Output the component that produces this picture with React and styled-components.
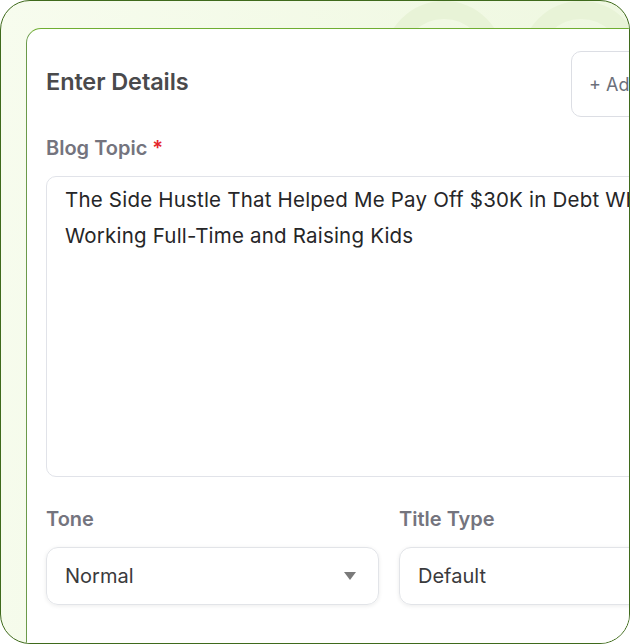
import React from 'react';
import styled, { createGlobalStyle } from 'styled-components';

const GlobalStyle = createGlobalStyle`
  * { box-sizing: border-box; }
  html, body { margin: 0; padding: 0; background: #ffffff; }
  body { font-family: Inter, "Noto Sans", sans-serif; }
`;

const Frame = styled.div`
  position: relative;
  width: 630px;
  height: 644px;
  border: 1.5px solid #3f6a1c;
  border-radius: 30px;
  overflow: hidden;
  background: linear-gradient(100deg, #f7fcee 0%, #f1f9e4 60%, #eef7e0 100%);
  padding: 27px 0 0 25px;
`;

const Decor = styled.svg`
  position: absolute;
  top: 0;
  left: 0;
  pointer-events: none;
`;

const Card = styled.div`
  position: relative;
  width: 726px;
  height: 700px;
  background: #ffffff;
  border-top: 1.5px solid #6fae32;
  border-left: 1.5px solid #6b9a4a;
  border-top-left-radius: 15px;
  padding: 22px 20px 0 19px;
`;

const Header = styled.div`
  display: flex;
  align-items: flex-start;
  justify-content: space-between;
  height: 66px;
`;

const Title = styled.h2`
  margin: 16px 0 0;
  line-height: 30px;
  font-size: 23.5px;
  font-weight: 600;
  color: #4a4a4c;
  letter-spacing: -0.1px;
`;

const GhostButton = styled.button`
  width: 161px;
  height: 66px;
  border: 1.5px solid #dcdee4;
  border-radius: 10px;
  background: #ffffff;
  font-family: inherit;
  font-size: 18px;
  color: #6b6f7a;
  text-align: left;
  padding-left: 17px;
  white-space: nowrap;
`;

const Field = styled.div`
  display: flex;
  flex-direction: column;
  margin-top: ${(p) => p.$top || 0}px;
`;

const Label = styled.label`
  font-size: 20px;
  font-weight: 600;
  color: #74747e;
  margin-bottom: 16px;
  line-height: 24px;

  span {
    color: #e5262b;
    margin-left: 5px;
  }
`;

const TextArea = styled.div`
  height: 301px;
  border: 1.5px solid #e1e3e9;
  border-radius: 10px;
  padding: 5px 18px;
  font-size: 20.5px;
  letter-spacing: 0.2px;
  line-height: 36px;
  color: #262628;
`;

const Row = styled.div`
  display: grid;
  grid-template-columns: 333px 333px;
  column-gap: 20px;
  margin-top: 30px;
`;

const Select = styled.div`
  height: 58px;
  border: 1px solid #e2e4e8;
  border-radius: 12px;
  box-shadow: 0 1px 4px rgba(0, 0, 0, 0.08);
  display: flex;
  align-items: center;
  justify-content: space-between;
  padding: 0 22px 0 18px;
  font-size: 20px;
  color: #3a3a3c;
`;

const Caret = styled.span`
  width: 0;
  height: 0;
  border-left: 6px solid transparent;
  border-right: 6px solid transparent;
  border-top: 8px solid #7a7a7a;
`;

export default function App() {
  return (
    <>
      <GlobalStyle />
      <Frame>
        <Decor width="630" height="60" viewBox="0 0 630 60">
          <circle cx="443" cy="60" r="51" fill="none" stroke="#e8f3d7" strokeWidth="18" />
          <circle cx="580" cy="60" r="51" fill="none" stroke="#e8f3d7" strokeWidth="18" />
        </Decor>
        <Card>
          <Header>
            <Title>Enter Details</Title>
            <GhostButton>+ Add Reference</GhostButton>
          </Header>
          <Field $top={19}>
            <Label>
              Blog Topic<span>*</span>
            </Label>
            <TextArea>
              The Side Hustle That Helped Me Pay Off $30K in Debt While Working Full-Time and Raising Kids
            </TextArea>
          </Field>
          <Row>
            <Field>
              <Label>Tone</Label>
              <Select>
                Normal
                <Caret />
              </Select>
            </Field>
            <Field>
              <Label>Title Type</Label>
              <Select>
                Default
                <Caret />
              </Select>
            </Field>
          </Row>
        </Card>
      </Frame>
    </>
  );
}
